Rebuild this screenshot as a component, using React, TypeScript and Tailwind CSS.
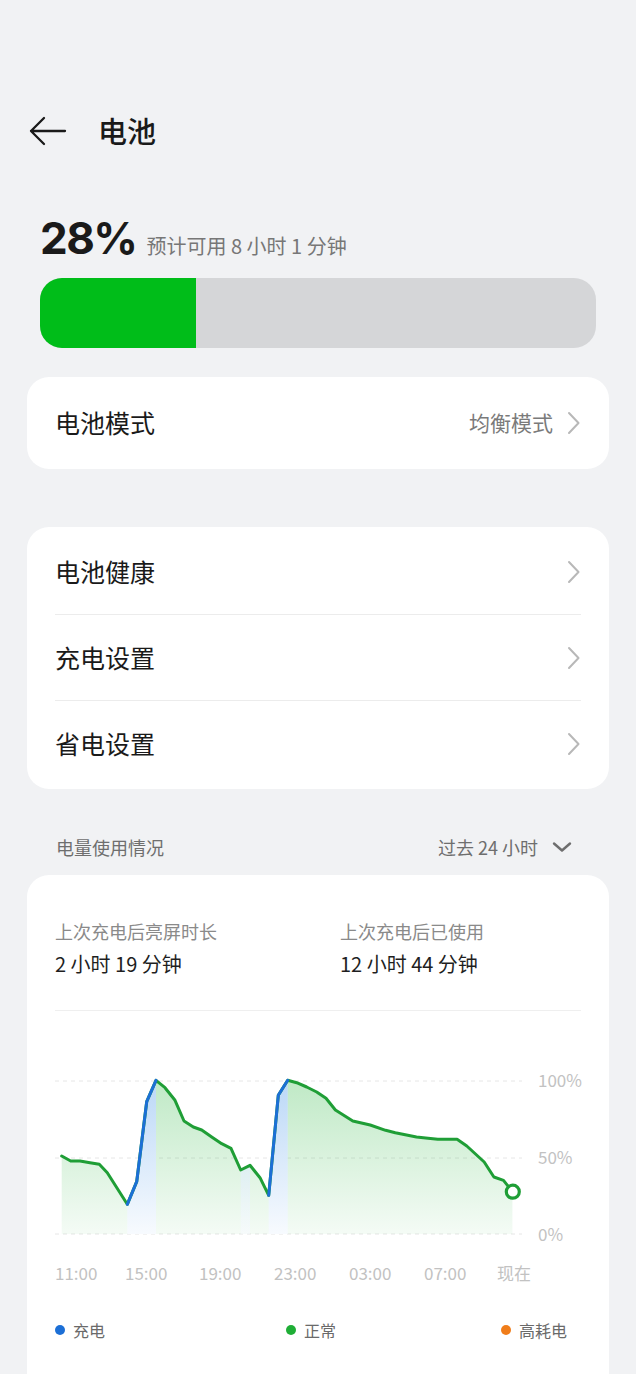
import { FC } from "react";

const pts: [number, number][] = [
  [61.7, 1155], [70.7, 1160], [80, 1160], [90, 1161.7], [99.3, 1163.3], [107.3, 1171.7],
  [127.3, 1203.3], [136.7, 1180.7], [146.7, 1100.7], [156, 1079.3], [165, 1086.7],
  [175, 1099.3], [184, 1120], [193.3, 1126], [201.7, 1129], [211.7, 1136], [221.7, 1142.7],
  [231, 1147.3], [240.7, 1169], [250, 1164.3], [260, 1176.7], [268.7, 1194.3],
  [278.3, 1094.3], [287.7, 1079.3], [296.7, 1081.7], [306.7, 1086], [316.7, 1091],
  [326, 1097.3], [335.4, 1109], [352.8, 1120], [370.2, 1124], [385.6, 1129.3],
  [395.3, 1131.7], [416.5, 1136], [428, 1137.3], [437.8, 1138.3], [457.1, 1138.3],
  [466.8, 1145], [484.2, 1161], [493.9, 1176], [503.5, 1179.3], [512.4, 1190.7],
];

const BASE = 1233;

const line = (p: [number, number][]) => p.map(([x, y]) => `${x},${y}`).join(" ");
const area = (p: [number, number][]) =>
  `M${p[0][0]},${BASE} ` + p.map(([x, y]) => `L${x},${y}`).join(" ") + ` L${p[p.length - 1][0]},${BASE} Z`;

const charge1 = pts.slice(6, 10);
const charge2 = pts.slice(21, 24);
const charge3 = pts.slice(18, 20);

const Chevron: FC = () => (
  <svg width="14" height="24" viewBox="0 0 14 24" fill="none">
    <path d="M2 2 L11.5 12 L2 22" stroke="#b8b8b8" strokeWidth="2" strokeLinecap="round" strokeLinejoin="round" />
  </svg>
);

const Row: FC<{ title: string; value?: string }> = ({ title, value }) => (
  <div className="mx-[28px] flex h-[86px] items-center justify-between border-b border-[#ececec] last:border-b-0">
    <span className="text-[25px] text-[#1a1a1a]">{title}</span>
    <div className="flex items-center gap-[14px]">
      {value && <span className="text-[21px] text-[#7a7a7a]">{value}</span>}
      <Chevron />
    </div>
  </div>
);

const xLabels: [string, number][] = [
  ["11:00", 55], ["15:00", 125], ["19:00", 199], ["23:00", 274], ["03:00", 349], ["07:00", 424], ["现在", 497],
];

const UsageChart: FC = () => (
  <svg width="582" height="290" viewBox="27 1011 582 290" className="mt-px block">
    <defs>
      <linearGradient id="gfill" x1="0" y1="1079" x2="0" y2="1233" gradientUnits="userSpaceOnUse">
        <stop offset="0" stopColor="#2bb640" stopOpacity="0.3" />
        <stop offset="1" stopColor="#2bb640" stopOpacity="0.05" />
      </linearGradient>
      <linearGradient id="bfill" x1="0" y1="1079" x2="0" y2="1233" gradientUnits="userSpaceOnUse">
        <stop offset="0" stopColor="#3d8fe8" stopOpacity="0.35" />
        <stop offset="1" stopColor="#3d8fe8" stopOpacity="0.04" />
      </linearGradient>
    </defs>
    {[1080, 1157, 1233].map((y) => (
      <line key={y} x1="55" x2="522" y1={y} y2={y} stroke="#e6e6e6" strokeWidth="1" strokeDasharray="4 4" />
    ))}
    <path d={area(pts)} fill="url(#gfill)" />
    <path d={area(charge1)} fill="#ffffff" />
    <path d={area(charge1)} fill="url(#bfill)" />
    <path d={area(charge2)} fill="#ffffff" />
    <path d={area(charge2)} fill="url(#bfill)" />
    <path d={area(charge3)} fill="#ffffff" opacity="0.6" />
    <path d={area(charge3)} fill="url(#bfill)" opacity="0.6" />
    <polyline points={line(pts)} fill="none" stroke="#1f9e36" strokeWidth="3" strokeLinejoin="round" strokeLinecap="round" />
    <polyline points={line(charge1)} fill="none" stroke="#1c6fd6" strokeWidth="3" strokeLinejoin="round" strokeLinecap="round" />
    <polyline points={line(charge2)} fill="none" stroke="#1c6fd6" strokeWidth="3" strokeLinejoin="round" strokeLinecap="round" />
    <circle cx="512.8" cy="1190.7" r="6.5" fill="#ffffff" stroke="#1f9e36" strokeWidth="3.2" />
    <g fill="#c2c2c2" fontSize="17" fontFamily="'Noto Sans CJK SC', sans-serif">
      <text x="538" y="1086">100%</text>
      <text x="538" y="1163">50%</text>
      <text x="538" y="1240">0%</text>
      {xLabels.map(([t, x]) => (
        <text key={t} x={x} y="1279">{t}</text>
      ))}
    </g>
  </svg>
);

const Legend: FC<{ color: string; label: string }> = ({ color, label }) => (
  <div className="flex items-center gap-[8px]">
    <span className="h-[10px] w-[10px] rounded-full" style={{ backgroundColor: color }} />
    <span className="text-[16px] text-[#6a6a6a]">{label}</span>
  </div>
);

const App: FC = () => {
  return (
    <div className="min-h-[1374px] overflow-hidden bg-[#f1f2f4] font-['Noto_Sans_CJK_SC',sans-serif]">
      <header className="mt-[110px] flex h-[42px] items-center pl-[29px]">
        <svg width="38" height="32" viewBox="0 0 38 32" fill="none">
          <path d="M2 16 H36 M15 3 L2 16 L15 29" stroke="#1a1a1a" strokeWidth="2.3" strokeLinecap="round" strokeLinejoin="round" />
        </svg>
        <h1 className="ml-[31px] text-[29px] font-medium text-[#1a1a1a]">电池</h1>
      </header>

      <section className="mt-[58px] px-[40px]">
        <div className="flex items-baseline">
          <span className="font-['Inter',sans-serif] text-[44px] font-bold leading-[56px] tracking-[-1.5px] text-[#1a1a1a]">28%</span>
          <span className="ml-[10px] text-[20px] text-[#777777]">预计可用 8 小时 1 分钟</span>
        </div>
        <div className="mt-[12px] flex h-[70px] overflow-hidden rounded-[22px] bg-[#d5d6d8]">
          <div className="h-full w-[28%] bg-[#00bd19]" />
        </div>
      </section>

      <div className="mx-[27px] mt-[29px] rounded-[22px] bg-white py-[3px]">
        <Row title="电池模式" value="均衡模式" />
      </div>

      <div className="mx-[27px] mt-[58px] rounded-[22px] bg-white py-[2px]">
        <Row title="电池健康" />
        <Row title="充电设置" />
        <Row title="省电设置" />
      </div>

      <div className="mx-[56px] mt-[44px] flex h-[28px] items-center justify-between">
        <span className="text-[18px] text-[#6e6e6e]">电量使用情况</span>
        <div className="flex items-center gap-[14px] pr-[8px]">
          <span className="text-[18px] text-[#6e6e6e]">过去 24 小时</span>
          <svg width="20" height="12" viewBox="0 0 20 12" fill="none">
            <path d="M2 2.5 L10 9.5 L18 2.5" stroke="#6e6e6e" strokeWidth="2.4" strokeLinecap="round" strokeLinejoin="round" />
          </svg>
        </div>
      </div>

      <div className="mx-[27px] mt-[14px] rounded-[22px] bg-white pb-[60px]">
        <div className="px-[28px] pt-[43px]">
          <div className="grid grid-cols-[285px_1fr]">
            <div className="flex flex-col gap-[6px]">
              <span className="text-[18px] leading-[26px] text-[#8a8a8a]">上次充电后亮屏时长</span>
              <span className="text-[20px] leading-[28px] text-[#1f1f1f]">2 小时 19 分钟</span>
            </div>
            <div className="flex flex-col gap-[6px]">
              <span className="text-[18px] leading-[26px] text-[#8a8a8a]">上次充电后已使用</span>
              <span className="text-[20px] leading-[28px] text-[#1f1f1f]">12 小时 44 分钟</span>
            </div>
          </div>
          <div className="mt-[32px] h-px bg-[#efefef]" />
        </div>
        <UsageChart />
        <div className="grid h-[56px] grid-cols-[231px_215px_1fr] items-center pl-[28px]">
          <Legend color="#1c6fd6" label="充电" />
          <Legend color="#1fae36" label="正常" />
          <Legend color="#f07d1a" label="高耗电" />
        </div>
      </div>
    </div>
  );
};

export default App;
